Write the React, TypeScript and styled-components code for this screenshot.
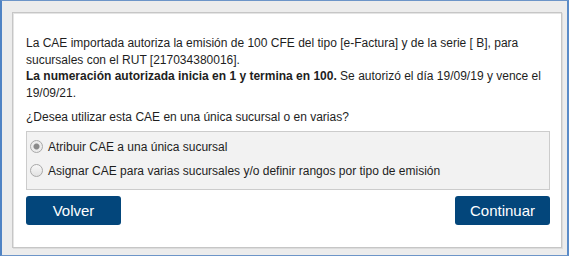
import React, {useState} from 'react';
import styled, {createGlobalStyle} from 'styled-components';

const options = [
  'Atribuir CAE a una única sucursal',
  'Asignar CAE para varias sucursales y/o definir rangos por tipo de emisión',
];

const App = () => {
  const [selected, setSelected] = useState(0);
  return (
    <>
      <GlobalStyle />
      <Frame>
        <Panel>
          <Text>
            La CAE importada autoriza la emisión de 100 CFE del tipo [e-Factura] y de la serie [ B], para
            sucursales con el RUT [217034380016].
            <br />
            <b>La numeración autorizada inicia en 1 y termina en 100.</b> Se autorizó el día 19/09/19 y vence el
            19/09/21.
          </Text>
          <Question>¿Desea utilizar esta CAE en una única sucursal o en varias?</Question>
          <Options>
            {options.map((el, id) => (
              <Option key={id} onClick={() => setSelected(id)}>
                <Radio checked={selected === id} />
                {el}
              </Option>
            ))}
          </Options>
          <Actions>
            <Button>Volver</Button>
            <Button>Continuar</Button>
          </Actions>
        </Panel>
      </Frame>
    </>
  );
};

const GlobalStyle = createGlobalStyle`
  body {
    margin: 0;
    font-family: 'Liberation Sans', Arial, sans-serif;
  }
`;

const Frame = styled.div`
  width: 569px;
  height: 256px;
  box-sizing: border-box;
  background: #ececec;
  border: 1px solid #6d95c8;
  border-left: 2px solid #4f83c4;
  border-right: 2px solid #5a8bc8;
  padding: 11px 5px 7px 10px;
`;

const Panel = styled.div`
  width: 550px;
  height: 236px;
  box-sizing: border-box;
  background: #ffffff;
  border: 1px solid #c6c6c6;
  box-shadow: inset 1px 1px 0 #e4e4e4, 1px 1px 0 #dcdcdc;
  padding: 22px 11px 0 13px;
  color: #1e1e1e;
  font-size: 12px;
`;

const Text = styled.p`
  margin: 0;
  line-height: 16.7px;
  b {
    font-weight: bold;
  }
`;

const Question = styled.p`
  margin: 7px 0 0;
  line-height: 17px;
`;

const Options = styled.div`
  margin-top: 5px;
  height: 59px;
  box-sizing: border-box;
  background: #f2f2f2;
  border: 1px solid #cccccc;
  padding: 3px 0 0 3px;
`;

const Option = styled.label`
  display: flex;
  align-items: center;
  gap: 5px;
  height: 24px;
  cursor: pointer;
`;

const Radio = styled.span<{checked: boolean}>`
  width: 11px;
  height: 11px;
  border-radius: 50%;
  border: 1px solid #a9a9a9;
  background: ${(props) => (props.checked
    ? 'radial-gradient(circle, #8a8a8a 0 2.5px, #ececec 3.5px)'
    : 'linear-gradient(#f8f8f8, #e2e2e2)')};
  flex-shrink: 0;
`;

const Actions = styled.div`
  margin-top: 6px;
  display: flex;
  justify-content: space-between;
`;

const Button = styled.button`
  width: 95px;
  height: 29px;
  border: none;
  border-radius: 3px;
  background: #03467b;
  color: #ffffff;
  font-family: 'Liberation Sans', Arial, sans-serif;
  font-size: 15px;
  cursor: pointer;
`;

export default App;
